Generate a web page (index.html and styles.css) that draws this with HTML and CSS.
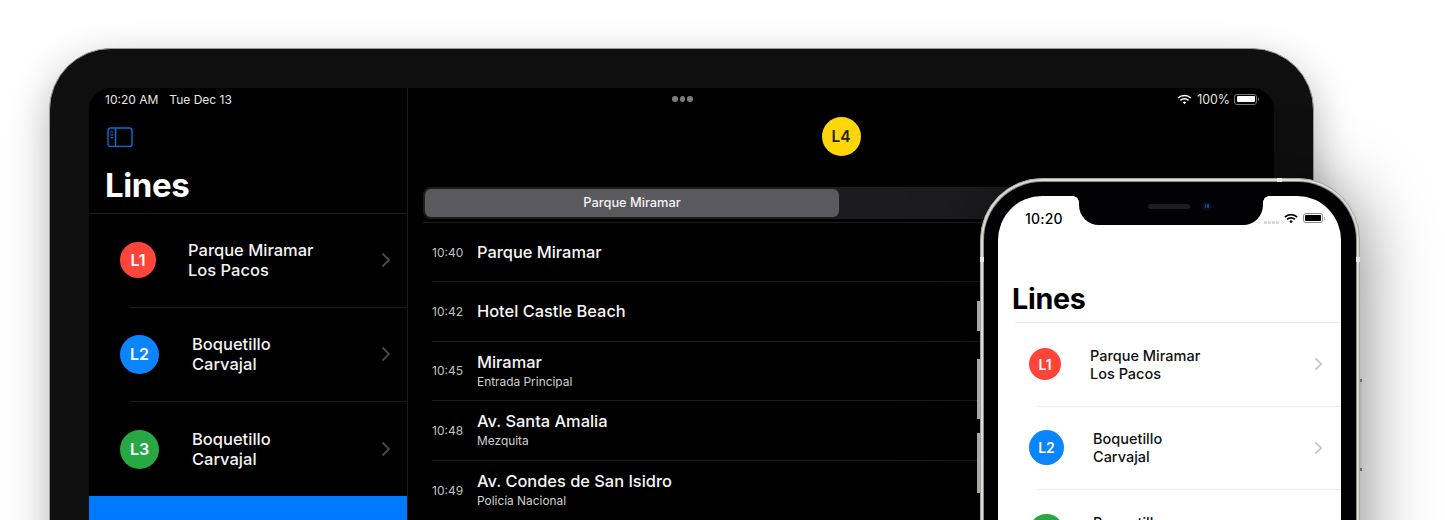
FILE: index.html
```html
<!DOCTYPE html>
<html lang="en">
<head>
<meta charset="utf-8">
<title>Lines</title>
<link rel="stylesheet" href="styles.css">
</head>
<body>
<div class="stage">
  <div class="tablet">
    <div class="tablet-screen">
      <aside class="sidebar">
        <div class="status status-side">
          <span>10:20 AM</span><span>Tue Dec 13</span>
        </div>
        <div class="toolbar">
          <svg class="panel-icon" width="26" height="21" viewBox="0 0 26 21" fill="none" stroke="#0a6fd8" stroke-width="1.4">
            <rect x="1" y="1" width="24" height="18.4" rx="2.5"/>
            <path d="M8.6 1v18.4"/>
            <path d="M3.4 5h2.8M3.4 7.8h2.8M3.4 10.6h2.8" stroke-width="1.2"/>
          </svg>
        </div>
        <h1 class="side-title">Lines</h1>
        <div class="line-row">
          <span class="badge badge-red badge-small">L1</span>
          <span class="line-names">Parque Miramar<br>Los Pacos</span>
          <svg class="chev" width="10" height="16" viewBox="0 0 10 16" fill="none" stroke="#4a4a4c" stroke-width="1.8"><path d="M1.5 1.5 8 8l-6.500 6.500"/></svg>
        </div>
        <div class="sep"></div>
        <div class="line-row">
          <span class="badge badge-blue">L2</span>
          <span class="line-names">Boquetillo<br>Carvajal</span>
          <svg class="chev" width="10" height="16" viewBox="0 0 10 16" fill="none" stroke="#4a4a4c" stroke-width="1.8"><path d="M1.5 1.500 8 8l-6.500 6.500"/></svg>
        </div>
        <div class="sep"></div>
        <div class="line-row line-row-last">
          <span class="badge badge-green">L3</span>
          <span class="line-names">Boquetillo<br>Carvajal</span>
          <svg class="chev" width="10" height="16" viewBox="0 0 10 16" fill="none" stroke="#4a4a4c" stroke-width="1.8"><path d="M1.5 1.500 8 8l-6.500 6.500"/></svg>
        </div>
        <div class="line-selected"></div>
      </aside>
      <main class="detail">
        <div class="status status-detail">
          <span class="dots"><i></i><i></i><i></i></span>
          <span class="status-right">
            <svg class="wifi" width="15" height="11" viewBox="0 0 16 12" fill="none" stroke="#fff" stroke-width="1.700"><path d="M1 4.400a10 10 0 0 1 14 0M3.500 7a6.500 6.500 0 0 1 9 0"/><path d="M6 9.100 8 11.300l2-2.200a2.800 2.800 0 0 0-4 0z" fill="#fff" stroke="none"/></svg>
            <span class="pct">100%</span>
            <span class="battery"><span class="battery-fill"></span></span>
          </span>
        </div>
        <div class="detail-head"><span class="badge badge-yellow">L4</span></div>
        <div class="segments">
          <span class="segment segment-on">Parque Miramar</span>
          <span class="segment">Los Pacos</span>
        </div>
        <div class="stops">
          <div class="stop"><span class="stop-time">10:40</span><span class="stop-text"><span class="stop-name">Parque Miramar</span></span></div>
          <div class="stop"><span class="stop-time">10:42</span><span class="stop-text"><span class="stop-name">Hotel Castle Beach</span></span></div>
          <div class="stop"><span class="stop-time">10:45</span><span class="stop-text"><span class="stop-name">Miramar</span><span class="stop-sub">Entrada Principal</span></span></div>
          <div class="stop"><span class="stop-time">10:48</span><span class="stop-text"><span class="stop-name">Av. Santa Amalia</span><span class="stop-sub">Mezquita</span></span></div>
          <div class="stop"><span class="stop-time">10:49</span><span class="stop-text"><span class="stop-name">Av. Condes de San Isidro</span><span class="stop-sub">Policía Nacional</span></span></div>
        </div>
      </main>
    </div>
  </div>

  <div class="phone">
    <span class="btn btn-l1"></span><span class="btn btn-l2"></span><span class="btn btn-l3"></span><span class="btn btn-r"></span>
    <span class="tick tick-top"></span><span class="tick tick-left"></span><span class="tick tick-right"></span>
    <div class="phone-bezel">
      <div class="phone-screen">
        <div class="notch"><span class="speaker"></span><span class="camera"><i></i><i></i></span></div>
        <div class="phone-status">
          <span class="phone-time">10:20</span>
          <span class="phone-icons">
            <span class="signal"><i></i><i></i><i></i><i></i></span>
            <svg width="14" height="11" viewBox="0 0 16 12" fill="none" stroke="#000" stroke-width="2"><path d="M1 4.400a10 10 0 0 1 14 0M3.500 7a6.500 6.500 0 0 1 9 0"/><path d="M6 9.100 8 11.300l2-2.200a2.800 2.800 0 0 0-4 0z" fill="#000" stroke="none"/></svg>
            <span class="battery battery-dark"><span class="battery-fill"></span></span>
          </span>
        </div>
        <h2 class="phone-title">Lines</h2>
        <div class="phone-row">
          <span class="badge badge-red pbadge-small">L1</span>
          <span class="phone-names">Parque Miramar<br>Los Pacos</span>
          <svg class="pchev" width="9" height="14" viewBox="0 0 10 16" fill="none" stroke="#c4c4c6" stroke-width="2"><path d="M1.500 1.500 8 8l-6.500 6.500"/></svg>
        </div>
        <div class="phone-sep"></div>
        <div class="phone-row">
          <span class="badge badge-blue pbadge">L2</span>
          <span class="phone-names">Boquetillo<br>Carvajal</span>
          <svg class="pchev" width="9" height="14" viewBox="0 0 10 16" fill="none" stroke="#c4c4c6" stroke-width="2"><path d="M1.500 1.500 8 8l-6.500 6.500"/></svg>
        </div>
        <div class="phone-sep"></div>
        <div class="phone-row">
          <span class="badge badge-green pbadge">L3</span>
          <span class="phone-names">Boquetillo<br>Carvajal</span>
          <svg class="pchev" width="9" height="14" viewBox="0 0 10 16" fill="none" stroke="#c4c4c6" stroke-width="2"><path d="M1.500 1.500 8 8l-6.500 6.500"/></svg>
        </div>
      </div>
    </div>
  </div>
</div>
</body>
</html>
```
FILE: styles.css
```css
* { box-sizing: border-box; }
html, body { margin: 0; padding: 0; background: #fff; }
body { font-family: Inter, "Liberation Sans", sans-serif; }

.stage {
  position: relative;
  width: 1445px;
  height: 520px;
  overflow: hidden;
  background: #fff;
}

/* Tablet */
.tablet {
  position: absolute;
  left: 49px;
  top: 48px;
  width: 1265px;
  height: 620px;
  padding: 39px;
  background: #0f0f0f;
  border: 1px solid #9a9a9a;
  border-radius: 62px;
  box-shadow: 0 14px 40px rgba(0, 0, 0, .3);
}
.tablet-screen {
  display: flex;
  height: 100%;
  background: #000;
  border-radius: 22px;
  overflow: hidden;
  color: #fff;
}

.sidebar {
  flex: 0 0 319px;
  border-right: 1px solid #1c1c1e;
  display: flex;
  flex-direction: column;
}
.status {
  height: 22px;
  display: flex;
  align-items: center;
  font-size: 12px;
  color: #e6e6e6;
  flex: none;
}
.status-side { padding-left: 16px; gap: 11px; }
.toolbar {
  height: 54px;
  flex: none;
  display: flex;
  align-items: center;
  padding-left: 18px;
}
.panel-icon { display: block; }
.side-title {
  margin: 0;
  height: 50px;
  flex: none;
  padding: 1px 0 8px 16px;
  font-size: 33px;
  line-height: 41px;
  font-weight: 700;
  letter-spacing: -.4px;
  color: #fff;
  border-bottom: 1px solid #1c1c1e;
}
.line-row {
  height: 93px;
  flex: none;
  display: flex;
  align-items: center;
  padding: 0 16px 1px 31px;
  gap: 33px;
}
.line-row-last { height: 94px; padding-bottom: 0; }
.line-names {
  flex: 1;
  font-size: 16.500px;
  line-height: 20px;
  font-weight: 500;
  color: #f2f2f2;
}
.chev { flex: none; }
.sep {
  height: 1px;
  flex: none;
  margin-left: 41px;
  background: #1c1c1e;
}
.line-selected { flex: 1; background: #007aff; }

.badge {
  flex: none;
  width: 39px;
  height: 39px;
  border-radius: 50%;
  display: flex;
  align-items: center;
  justify-content: center;
  font-size: 16px;
  font-weight: 600;
  color: #fff;
}
.badge-small { width: 36px; height: 36px; margin-right: -1px; }
.badge-red { background: #ff453a; }
.badge-blue { background: #0a84ff; }
.badge-green { background: #28a745; }
.badge-yellow { background: #ffd60a; color: #222; font-size: 15.500px; }

/* Detail pane */
.detail {
  flex: 1;
  display: flex;
  flex-direction: column;
  min-width: 0;
}
.status-detail { padding-right: 17px; }
.dots { display: flex; gap: 2px; margin-left: 264px; }
.dots i { width: 5.500px; height: 5.500px; border-radius: 50%; background: #7a7a7c; }
.status-right { margin-left: auto; display: flex; align-items: center; gap: 4px; }
.wifi { margin-right: 1px; }
.pct { font-size: 12.400px; }
.battery {
  position: relative;
  display: block;
  width: 23px;
  height: 11px;
  padding: 1.500px;
  border: 1px solid #777;
  border-radius: 3px;
}
.battery::after {
  content: "";
  position: absolute;
  right: -3px;
  top: 3px;
  width: 1.500px;
  height: 3px;
  background: #777;
  border-radius: 0 1px 1px 0;
}
.battery-fill { display: block; height: 100%; background: #fff; border-radius: 1px; }
.detail-head {
  height: 77px;
  flex: none;
  display: flex;
  justify-content: center;
  padding-top: 7px;
}
.segments {
  height: 32px;
  flex: none;
  margin: 0 19px 3px 15px;
  padding: 2px;
  display: flex;
  background: #1c1c1e;
  border-radius: 8px;
}
.segment {
  flex: 1;
  display: flex;
  align-items: center;
  justify-content: center;
  padding-bottom: 1px;
  font-size: 12.800px;
  font-weight: 500;
  color: #f2f2f2;
}
.segment-on { background: #5a5a5e; border-radius: 6px; }
.stops { margin-left: 15px; border-top: 1px solid #1c1c1e; }
.stop {
  height: 59.500px;
  display: flex;
  align-items: center;
  margin-left: 9px;
  border-bottom: 1px solid #1c1c1e;
}
.stop:first-child { height: 59px; }
.stop:last-child { border-bottom: 0; }
.stop-time { flex: 0 0 45px; font-size: 12px; color: #c0c0c0; }
.stop-text { display: flex; flex-direction: column; }
.stop-name { font-size: 16.400px; line-height: 20px; font-weight: 500; color: #f5f5f5; }
.stop-sub { font-size: 11.900px; line-height: 16px; margin-top: 2px; color: #d0d0d0; }

/* Phone */
.phone {
  position: absolute;
  left: 980px;
  top: 178px;
  width: 380px;
  height: 460px;
  padding: 3px;
  background: #dcdcd8;
  border: 1px solid #a4a4a0;
  border-radius: 62px;
  box-shadow: 0 10px 70px rgba(0, 0, 0, .5);
}
.phone-bezel {
  height: 100%;
  padding: 14px 15px 14px 14px;
  background: #020205;
  border-radius: 58px;
  box-shadow: 0 0 0 1px #8e8e8a;
}
.phone-screen {
  position: relative;
  height: 100%;
  background: #fff;
  border-radius: 44px;
  overflow: hidden;
  color: #000;
}
.btn { position: absolute; background: #a8a8a4; }
.btn-l1 { left: -4px; top: 122px; width: 3px; height: 30px; }
.btn-l2 { left: -4px; top: 180px; width: 3px; height: 60px; }
.btn-l3 { left: -4px; top: 254px; width: 3px; height: 60px; }
.btn-r {
  right: -3px;
  top: 200px;
  width: 2px;
  height: 92px;
  background: linear-gradient(#666 0 3px, #b8b8b4 3px calc(100% - 3px), #666 calc(100% - 3px));
}
.tick { position: absolute; background: #e8e8e6; }
.tick-top { left: 296px; top: -1px; width: 5px; height: 4px; }
.tick-left { left: -1px; top: 78px; width: 4px; height: 5px; }
.tick-right { right: -1px; top: 78px; width: 4px; height: 5px; }

.notch {
  position: absolute;
  left: 81px;
  top: 0;
  width: 184px;
  height: 29px;
  background: #020205;
  border-radius: 0 0 20px 20px;
  display: flex;
  align-items: center;
  padding: 0 0 9px 69px;
  gap: 12px;
}
.notch::before, .notch::after {
  content: "";
  position: absolute;
  top: 0;
  width: 6px;
  height: 6px;
}
.notch::before { left: -6px; background: radial-gradient(circle at 0 100%, transparent 5.500px, #020205 6px); }
.notch::after { right: -6px; background: radial-gradient(circle at 100% 100%, transparent 5.500px, #020205 6px); }
.speaker { width: 42px; height: 5px; background: #1d1d1f; border-radius: 3px; }
.camera {
  width: 9px;
  height: 9px;
  border-radius: 50%;
  background: #0c0c18;
  display: flex;
  align-items: center;
  justify-content: center;
  gap: 1px;
}
.camera i { width: 1.500px; height: 4px; background: #0b4fb0; border-radius: 1px; }

.phone-status {
  height: 44px;
  display: flex;
  align-items: center;
  padding: 0 18px 0 27px;
}
.phone-time { font-size: 14px; font-weight: 500; letter-spacing: .2px; }
.phone-icons { margin-left: auto; display: flex; align-items: center; gap: 5px; }
.signal { display: flex; gap: 1px; align-self: flex-end; }
.signal i { width: 3px; height: 3px; background: #d4d4d4; border-radius: 1px; }
.battery-dark { width: 20px; height: 10px; padding: 1px; border-color: #8a8a8a; }
.battery-dark .battery-fill { background: #000; }
.battery-dark::after { background: #aaa; top: 2.500px; }

.phone-title {
  margin: 0;
  height: 83px;
  padding: 40px 0 0 14px;
  font-size: 28.700px;
  line-height: 37px;
  font-weight: 700;
  letter-spacing: -.3px;
  position: relative;
}
.phone-title::after {
  content: "";
  position: absolute;
  left: 17px;
  right: 0;
  bottom: 0;
  height: 1px;
  background: #ececec;
}
.phone-row {
  height: 82.500px;
  display: flex;
  align-items: center;
  padding: 0 18px 0 31px;
  gap: 29px;
}
.phone-names {
  flex: 1;
  padding-top: 1px;
  font-size: 14.500px;
  line-height: 18px;
  font-weight: 500;
  color: #111;
}
.pchev { flex: none; }
.pbadge { width: 35px; height: 35px; font-size: 14px; }
.pbadge-small { width: 32px; height: 32px; font-size: 14px; }
.phone-sep { height: 1px; margin-left: 40px; background: #ececec; }
```
